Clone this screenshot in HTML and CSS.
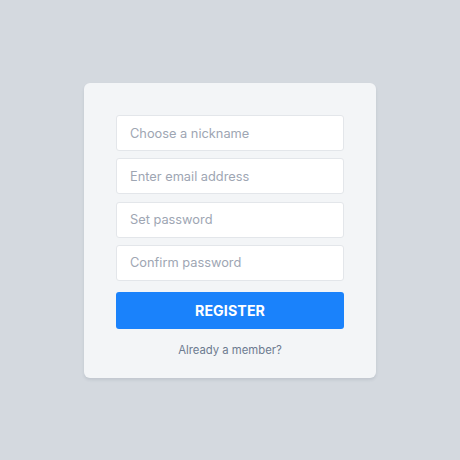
FILE: index.html
```html
<!DOCTYPE html>
<html>
<head>
<meta charset="utf-8">
<link rel="stylesheet" href="styles.css">
</head>
<body>
<form class="card">
  <input class="field" type="text" placeholder="Choose a nickname">
  <input class="field" type="email" placeholder="Enter email address">
  <input class="field" type="password" placeholder="Set password">
  <input class="field" type="password" placeholder="Confirm password">
  <button class="btn" type="button">REGISTER</button>
  <a class="link" href="#">Already a member?</a>
</form>
</body>
</html>
```
FILE: styles.css
```css
html, body {
  margin: 0;
  padding: 0;
}
body {
  background: #d4d9df;
  min-height: 100vh;
  display: flex;
  align-items: center;
  justify-content: center;
  font-family: Inter, "Noto Sans", sans-serif;
}
.card {
  box-sizing: border-box;
  width: 292px;
  height: 295px;
  margin-top: 1px;
  background: #f3f5f7;
  border-radius: 6px;
  padding: 32px 32px 0;
  display: flex;
  flex-direction: column;
  box-shadow: 0 2px 3px rgba(60, 70, 90, 0.12);
}
.field {
  box-sizing: border-box;
  height: 36px;
  margin: 0 0 7.33px;
  border: 1px solid #e3e6ea;
  border-radius: 3px;
  background: #fff;
  padding: 0 13px;
  font-family: inherit;
  font-size: 12.8px;
  color: #333;
  outline: none;
}
.field::placeholder {
  color: #9ea6b3;
}
.field:nth-of-type(4) {
  margin-bottom: 11px;
}
.btn {
  height: 37px;
  border: none;
  border-radius: 3px;
  background: #1a82fb;
  color: #fff;
  font-family: inherit;
  font-weight: 700;
  font-size: 14.2px;
  letter-spacing: 0.1px;
  cursor: pointer;
}
.link {
  margin-top: 13px;
  align-self: center;
  font-size: 11.3px;
  line-height: 16px;
  color: #6d7b90;
  text-decoration: none;
}
```
